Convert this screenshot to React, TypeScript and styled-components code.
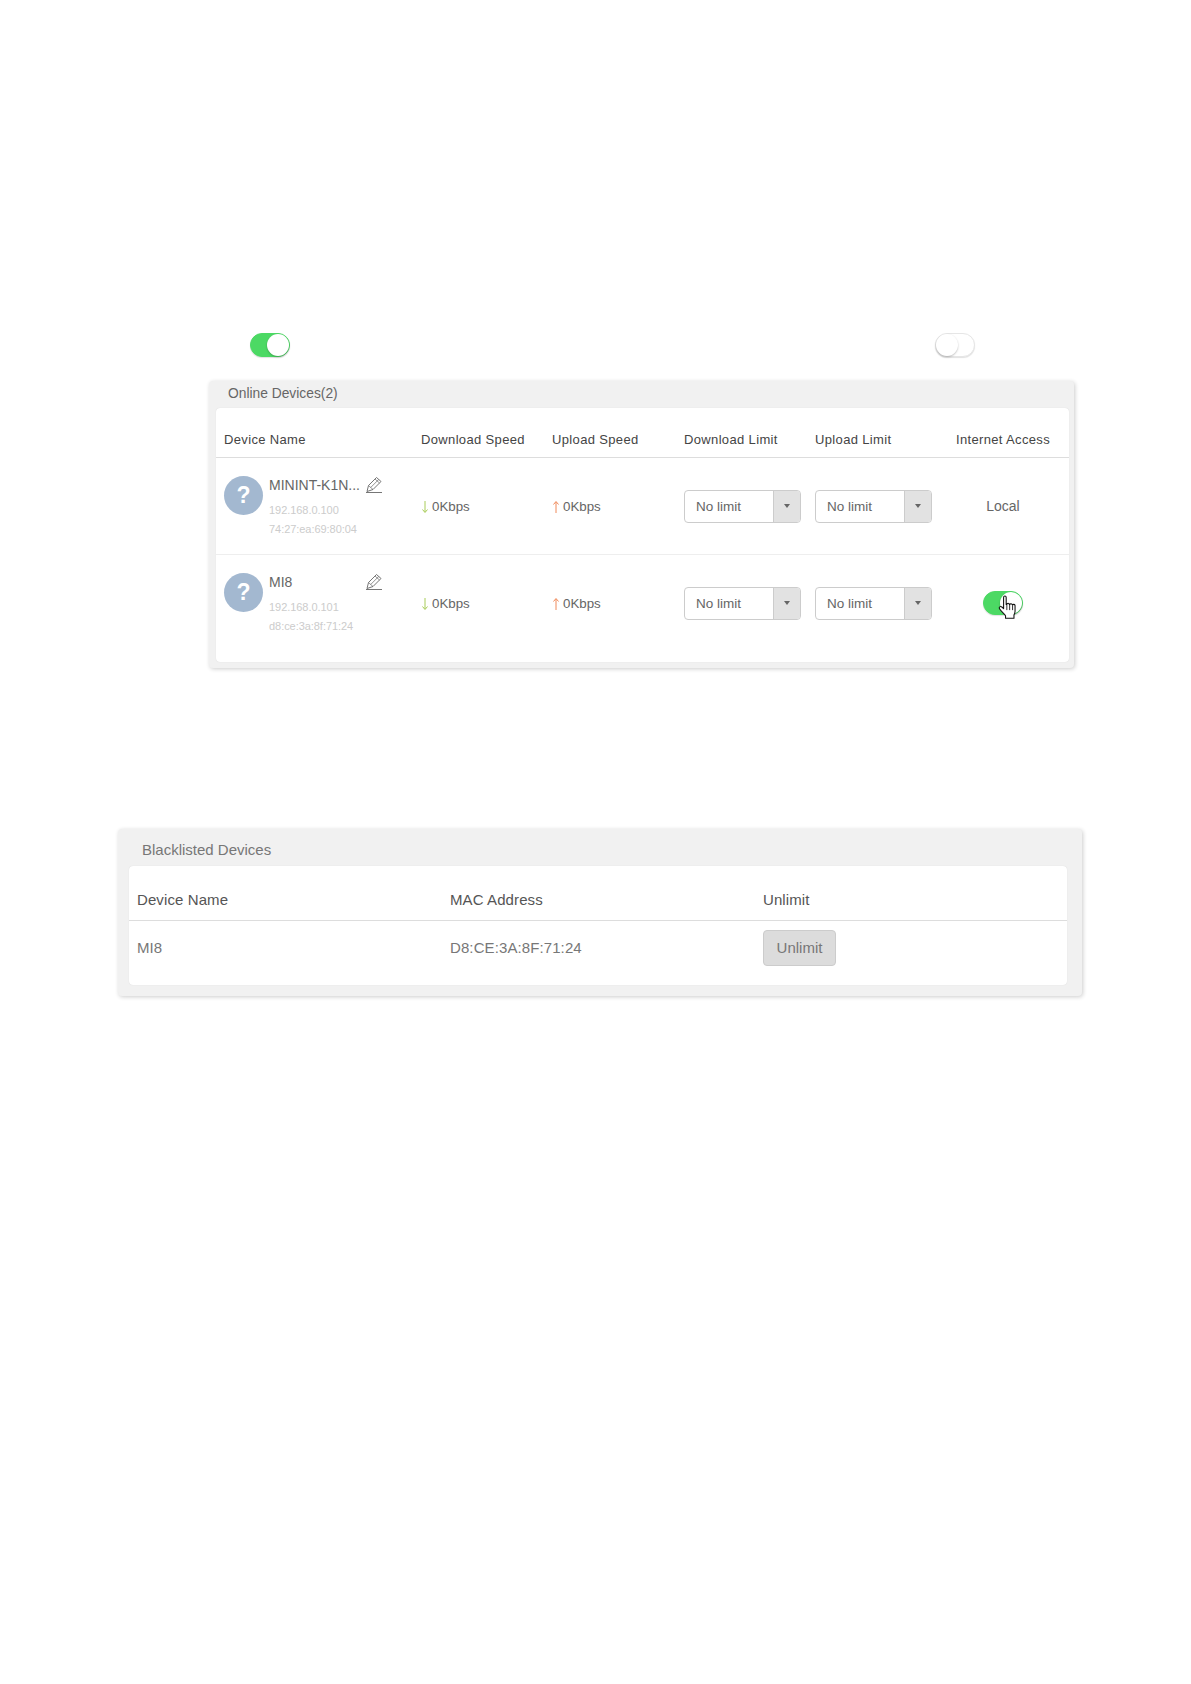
import React from "react";
import styled, { createGlobalStyle } from "styled-components";

const Global = createGlobalStyle`
  html, body { margin: 0; padding: 0; background: #fff; }
  body { font-family: "Liberation Sans", Arial, sans-serif; }
`;

const Page = styled.div`
  width: 1191px;
  height: 1684px;
  box-sizing: border-box;
  padding-top: 333px;
`;

const ToggleRow = styled.div`
  display: flex;
  justify-content: space-between;
  box-sizing: border-box;
  width: 725px;
  margin-left: 250px;
  height: 25px;
`;

const Toggle = styled.div<{ $on?: boolean }>`
  position: relative;
  flex: none;
  box-sizing: border-box;
  width: 40px;
  height: 24px;
  border-radius: 12px;
  background: ${(p) => (p.$on ? "#4cd964" : "#fff")};
  border: 1px solid ${(p) => (p.$on ? "#4cd964" : "#e6e6e6")};
  box-shadow: 0 1px 1px rgba(0, 0, 0, 0.12);
  &::after {
    content: "";
    position: absolute;
    top: 0;
    ${(p) => (p.$on ? "right: 0;" : "left: 0;")}
    width: 22px;
    height: 22px;
    border-radius: 50%;
    background: #fff;
    box-shadow: 0 1px 2px rgba(0, 0, 0, 0.25);
  }
`;

const OnlinePanel = styled.section`
  box-sizing: border-box;
  width: 865px;
  height: 287px;
  margin: 23px 0 0 209px;
  padding: 0 5px 6px 7px;
  background: #f1f1f1;
  border-radius: 4px;
  box-shadow: 1px 1px 4px rgba(0, 0, 0, 0.2);
  display: flex;
  flex-direction: column;
`;

const OnlineTitle = styled.h2`
  margin: 0;
  height: 27px;
  padding-left: 12px;
  font-size: 13.8px;
  font-weight: 400;
  line-height: 25px;
  color: #666;
`;

const Card = styled.div`
  flex: 1;
  background: #fff;
  border-radius: 4px;
  box-shadow: 0 0 1px rgba(0, 0, 0, 0.15);
`;

const OnlineGrid = "205px 131px 132px 131px 131px 114px";

const OnlineHead = styled.div`
  display: grid;
  grid-template-columns: ${OnlineGrid};
  align-items: center;
  box-sizing: border-box;
  height: 50px;
  padding-top: 14px;
  border-bottom: 1px solid #ddd;
`;

const HeadCell = styled.div<{ $center?: boolean }>`
  font-size: 13px;
  letter-spacing: 0.35px;
  color: #444;
  white-space: nowrap;
  text-align: ${(p) => (p.$center ? "center" : "left")};
  &:first-child {
    padding-left: 8px;
  }
`;

const OnlineRow = styled.div<{ $last?: boolean }>`
  display: grid;
  grid-template-columns: ${OnlineGrid};
  align-items: center;
  box-sizing: border-box;
  height: ${(p) => (p.$last ? "106px" : "97px")};
  padding-bottom: ${(p) => (p.$last ? "10px" : "0")};
  border-bottom: ${(p) => (p.$last ? "none" : "1px solid #eee")};
`;

const DeviceCell = styled.div`
  display: flex;
  padding-left: 8px;
  align-self: start;
  margin-top: 18px;
`;

const Avatar = styled.div`
  flex: none;
  width: 39px;
  height: 39px;
  border-radius: 50%;
  background: #a3b8d0;
  color: #fff;
  font-size: 23px;
  font-weight: 700;
  line-height: 39px;
  text-align: center;
`;

const DeviceInfo = styled.div`
  margin-left: 6px;
  width: 114px;
`;

const NameLine = styled.div`
  display: flex;
  align-items: center;
  justify-content: space-between;
  height: 18px;
  margin-bottom: 7px;
  font-size: 14px;
  color: #666;
  white-space: nowrap;
`;

const PencilIcon = styled.svg`
  width: 18px;
  height: 18px;
  flex: none;
  margin-top: -1px;
  fill: none;
  stroke: #666;
  stroke-width: 0.9;
`;

const MetaLine = styled.div`
  font-size: 11px;
  line-height: 18.5px;
  letter-spacing: -0.05px;
  color: #ccc;
  white-space: nowrap;
`;

const SpeedCell = styled.div`
  display: flex;
  align-items: center;
  gap: 3px;
  font-size: 13.3px;
  color: #666;
`;

const ArrowIcon = styled.svg<{ $color: string }>`
  width: 8px;
  height: 14px;
  margin-top: 2px;
  fill: none;
  stroke: ${(p) => p.$color};
  stroke-width: 1;
`;

const SelectBox = styled.div`
  display: flex;
  box-sizing: border-box;
  width: 117px;
  height: 33px;
  border: 1px solid #ccc;
  border-radius: 4px;
  overflow: hidden;
  background: #fff;
`;

const SelectValue = styled.div`
  flex: 1;
  padding-left: 11px;
  font-size: 13.5px;
  line-height: 31px;
  color: #666;
`;

const SelectCaret = styled.div`
  flex: none;
  box-sizing: border-box;
  width: 27px;
  background: #e2e2e2;
  border-left: 1px solid #ccc;
  display: flex;
  align-items: center;
  justify-content: center;
  &::after {
    content: "";
    border-left: 3.5px solid transparent;
    border-right: 3.5px solid transparent;
    border-top: 4px solid #666;
  }
`;

const AccessCell = styled.div`
  display: flex;
  justify-content: center;
  font-size: 14px;
  color: #666;
`;

const ToggleHolder = styled.div`
  position: relative;
`;

const HandIcon = styled.svg`
  position: absolute;
  left: 14px;
  top: 4px;
  width: 24px;
  height: 27px;
`;

const BlackPanel = styled.section`
  box-sizing: border-box;
  width: 964px;
  height: 167px;
  margin: 161px 0 0 118px;
  padding: 0 15px 11px 11px;
  background: #f1f1f1;
  border-radius: 4px;
  box-shadow: 1px 1px 4px rgba(0, 0, 0, 0.2);
  display: flex;
  flex-direction: column;
`;

const BlackTitle = styled.h2`
  margin: 0;
  height: 37px;
  padding-left: 13px;
  font-size: 15px;
  font-weight: 400;
  line-height: 41px;
  color: #777;
`;

const BlackGrid = "313px 313px 1fr";

const BlackHead = styled.div`
  display: grid;
  grid-template-columns: ${BlackGrid};
  align-items: center;
  box-sizing: border-box;
  height: 55px;
  padding-top: 13px;
  border-bottom: 1px solid #ddd;
  font-size: 15px;
  letter-spacing: 0.1px;
  color: #555;
`;

const BlackRow = styled.div`
  display: grid;
  grid-template-columns: ${BlackGrid};
  align-items: center;
  height: 53px;
  font-size: 15px;
  letter-spacing: 0.1px;
  color: #777;
`;

const BlackCell = styled.div`
  padding-left: 8px;
  white-space: nowrap;
`;

const UnlimitButton = styled.button`
  box-sizing: border-box;
  width: 73px;
  height: 36px;
  padding: 0;
  border: 1px solid #ccc;
  border-radius: 4px;
  background: #dcdcdc;
  font: inherit;
  color: #777;
`;

const Pencil = () => (
  <PencilIcon viewBox="0 0 18 18">
    <path d="M3.500 9.500 11.500 1.500 16 5.500 8 13.500 2 15.500Z" />
    <path d="M5.700 11.500 13.700 3.500M10 3 14.500 7M3.500 9.500 8 13.500" strokeWidth=".7" />
    <path d="M1 16.500H17" />
  </PencilIcon>
);

const Down = () => (
  <ArrowIcon $color="#a8cc58" viewBox="0 0 8 14">
    <path d="M4 1V12M1.500 9.500 4 12.500 6.500 9.500" />
  </ArrowIcon>
);

const Up = () => (
  <ArrowIcon $color="#f08a5a" viewBox="0 0 8 14">
    <path d="M4 13V2M1.500 4.500 4 1.500 6.500 4.500" />
  </ArrowIcon>
);

const Select = () => (
  <SelectBox>
    <SelectValue>No limit</SelectValue>
    <SelectCaret />
  </SelectBox>
);

const Device = ({ name, ip, mac }: { name: string; ip: string; mac: string }) => (
  <DeviceCell>
    <Avatar>?</Avatar>
    <DeviceInfo>
      <NameLine>
        {name}
        <Pencil />
      </NameLine>
      <MetaLine>{ip}</MetaLine>
      <MetaLine>{mac}</MetaLine>
    </DeviceInfo>
  </DeviceCell>
);

const Speeds = () => (
  <>
    <SpeedCell>
      <Down />
      0Kbps
    </SpeedCell>
    <SpeedCell>
      <Up />
      0Kbps
    </SpeedCell>
  </>
);

export default function App() {
  return (
    <Page>
      <Global />
      <ToggleRow>
        <Toggle $on />
        <Toggle />
      </ToggleRow>
      <OnlinePanel>
        <OnlineTitle>Online Devices(2)</OnlineTitle>
        <Card>
          <OnlineHead>
            <HeadCell>Device Name</HeadCell>
            <HeadCell>Download Speed</HeadCell>
            <HeadCell>Upload Speed</HeadCell>
            <HeadCell>Download Limit</HeadCell>
            <HeadCell>Upload Limit</HeadCell>
            <HeadCell $center>Internet Access</HeadCell>
          </OnlineHead>
          <OnlineRow>
            <Device name="MININT-K1N..." ip="192.168.0.100" mac="74:27:ea:69:80:04" />
            <Speeds />
            <Select />
            <Select />
            <AccessCell>Local</AccessCell>
          </OnlineRow>
          <OnlineRow $last>
            <Device name="MI8" ip="192.168.0.101" mac="d8:ce:3a:8f:71:24" />
            <Speeds />
            <Select />
            <Select />
            <AccessCell>
              <ToggleHolder>
                <Toggle $on />
                <HandIcon viewBox="0 0 22 25">
                  <path
                    d="M6 2.200c0-1.600 2.400-1.600 2.400 0v6.600l.6-.1c0-1.400 2.200-1.400 2.300 0l.4.2c.2-1.200 2.200-1.100 2.300.2l.4.2c.4-1 2.100-.8 2.200.5V15c0 1.600-.5 2.600-1 3.600v3H7.800v-2.400C6.500 17.500 3.500 15 2.200 12.800c-.9-1.600.9-2.800 2.200-1.700L6 12.600Z"
                    fill="#fff"
                    stroke="#111"
                    strokeWidth="1"
                    strokeLinejoin="round"
                  />
                  <path d="M9 9v5M11.600 9v5M14.300 9.500V14" stroke="#111" strokeWidth=".8" fill="none" />
                </HandIcon>
              </ToggleHolder>
            </AccessCell>
          </OnlineRow>
        </Card>
      </OnlinePanel>
      <BlackPanel>
        <BlackTitle>Blacklisted Devices</BlackTitle>
        <Card>
          <BlackHead>
            <BlackCell>Device Name</BlackCell>
            <BlackCell>MAC Address</BlackCell>
            <BlackCell>Unlimit</BlackCell>
          </BlackHead>
          <BlackRow>
            <BlackCell>MI8</BlackCell>
            <BlackCell>D8:CE:3A:8F:71:24</BlackCell>
            <BlackCell>
              <UnlimitButton>Unlimit</UnlimitButton>
            </BlackCell>
          </BlackRow>
        </Card>
      </BlackPanel>
    </Page>
  );
}
